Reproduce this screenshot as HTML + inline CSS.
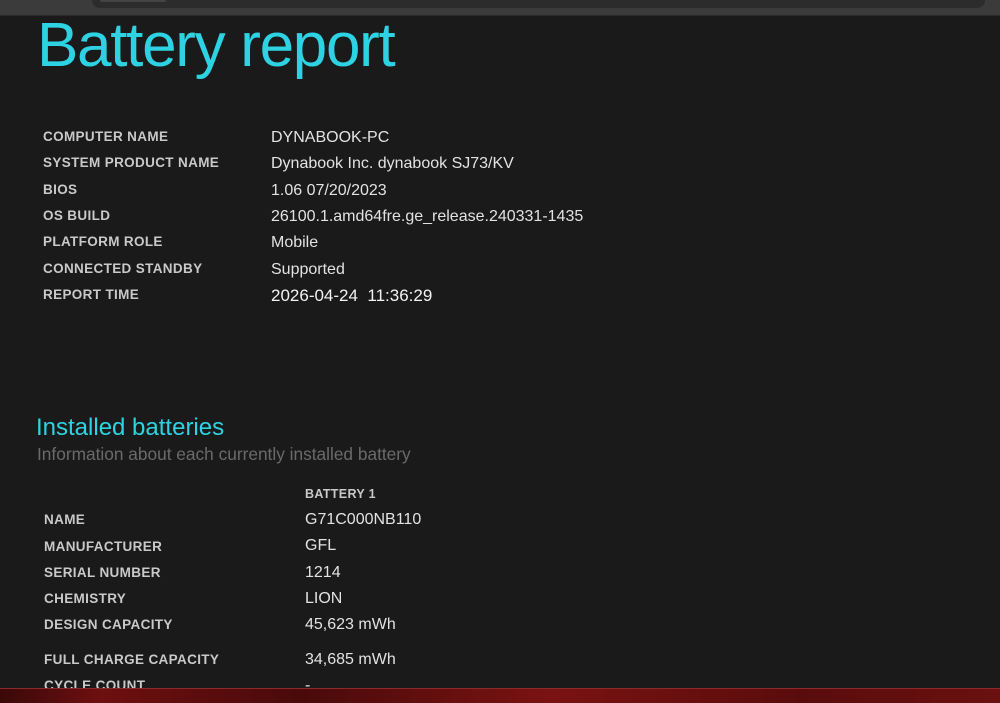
<!DOCTYPE html>
<html><head><meta charset="utf-8"><style>
body{margin:0;width:1000px;height:702px;background:#1a1a1a;overflow:hidden;position:relative;font-family:"Liberation Sans",sans-serif}
.top{position:absolute;left:0;top:0;width:1000px;height:15px;background:#3b3b3b;border-bottom:1px solid #2a2a2a}
.tab{position:absolute;left:92px;top:0;width:893px;height:8px;background:#2c2c2c;border-radius:0 0 8px 8px}
.tab2{position:absolute;left:100px;top:0;width:66px;height:2px;background:#444;border-radius:0 0 4px 4px}
.bot{position:absolute;left:0;top:688px;width:1000px;height:14px;background:linear-gradient(90deg,#3a0808,#6e0f10 10%,#4a0a0a 30%,#7a1212 55%,#5a0c0c 80%,#6a1010);border-top:1px solid #8a2a2a}
h1{position:absolute;left:37px;top:10px;margin:0;font-weight:normal;font-size:62px;color:#2ed3e3;letter-spacing:-1.3px;line-height:normal}
.l{position:absolute;font-size:13.5px;font-weight:bold;color:#c9c9c9;letter-spacing:.35px}
.v{position:absolute;font-size:16px;color:#e2e2e2}
h2{position:absolute;left:36px;top:414px;margin:0;font-weight:normal;font-size:24px;color:#2ed3e3}
.sub{position:absolute;left:37px;top:444px;font-size:17.3px;color:#6a6a6a}
</style></head><body>
<div class="top"><div class="tab"></div><div class="tab2"></div></div>
<h1>Battery report</h1>
<div class="l" style="left:43px;top:129px">COMPUTER NAME</div><div class="v" style="left:271px;top:129px">DYNABOOK-PC</div>
<div class="l" style="left:43px;top:155px">SYSTEM PRODUCT NAME</div><div class="v" style="left:271px;top:155px">Dynabook Inc. dynabook SJ73/KV</div>
<div class="l" style="left:43px;top:182px">BIOS</div><div class="v" style="left:271px;top:182px">1.06 07/20/2023</div>
<div class="l" style="left:43px;top:208px">OS BUILD</div><div class="v" style="left:271px;top:208px">26100.1.amd64fre.ge_release.240331-1435</div>
<div class="l" style="left:43px;top:234px">PLATFORM ROLE</div><div class="v" style="left:271px;top:234px">Mobile</div>
<div class="l" style="left:43px;top:261px">CONNECTED STANDBY</div><div class="v" style="left:271px;top:261px">Supported</div>
<div class="l" style="left:43px;top:287px">REPORT TIME</div><div class="v" style="left:271px;top:286px;font-size:17px;color:#f2f2f2">2026-04-24&nbsp; 11:36:29</div>
<h2>Installed batteries</h2>
<div class="sub">Information about each currently installed battery</div>
<div class="l" style="left:305px;top:487px;font-size:12.5px">BATTERY 1</div>
<div class="l" style="left:44px;top:512px">NAME</div><div class="v" style="left:305px;top:511px">G71C000NB110</div>
<div class="l" style="left:44px;top:539px">MANUFACTURER</div><div class="v" style="left:305px;top:537px">GFL</div>
<div class="l" style="left:44px;top:565px">SERIAL NUMBER</div><div class="v" style="left:305px;top:564px">1214</div>
<div class="l" style="left:44px;top:591px">CHEMISTRY</div><div class="v" style="left:305px;top:590px">LION</div>
<div class="l" style="left:44px;top:617px">DESIGN CAPACITY</div><div class="v" style="left:305px;top:616px">45,623 mWh</div>
<div class="l" style="left:44px;top:652px">FULL CHARGE CAPACITY</div><div class="v" style="left:305px;top:651px">34,685 mWh</div>
<div class="l" style="left:44px;top:678px">CYCLE COUNT</div><div class="v" style="left:305px;top:677px">-</div>
<div class="bot"></div>
</body></html>
